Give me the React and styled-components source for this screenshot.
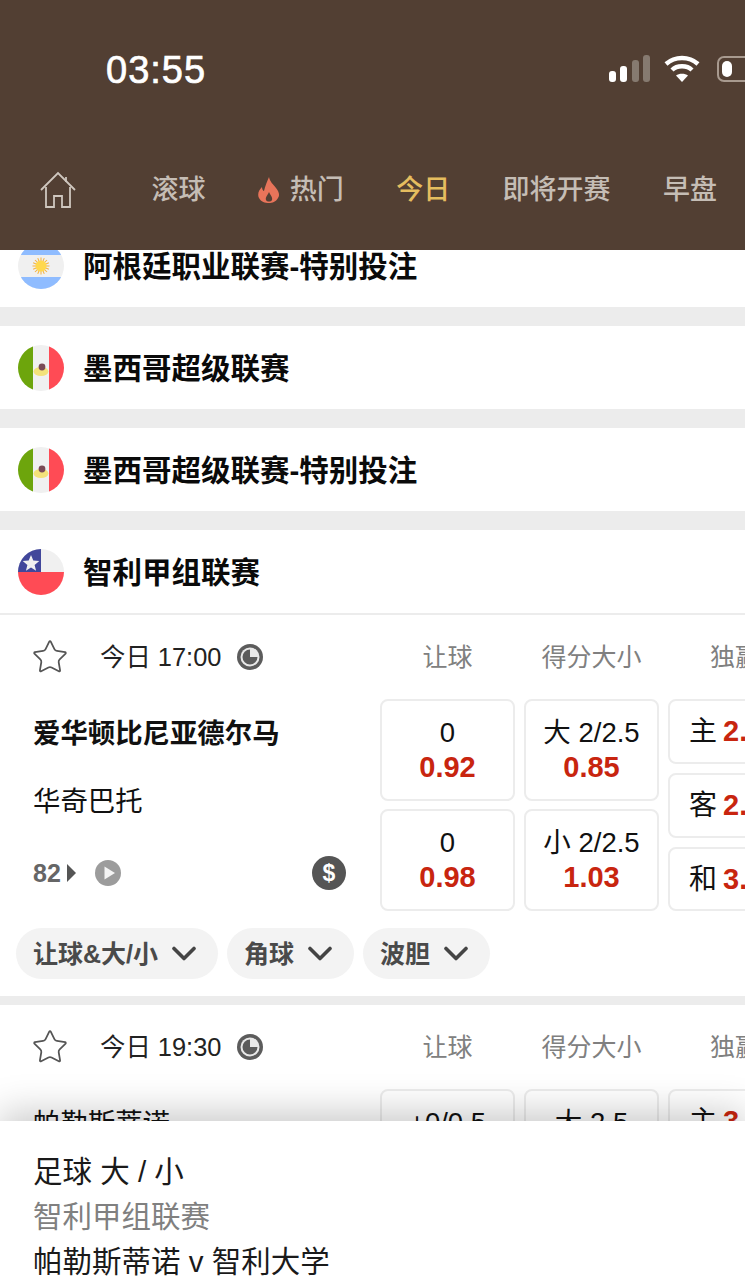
import * as React from "react"
import styled, { createGlobalStyle } from "styled-components"
import { Star } from "lucide-react"

const CJK = `"Liberation Sans", "Noto Sans CJK SC", sans-serif`

const GlobalStyle = createGlobalStyle`
  html, body {
    margin: 0;
    padding: 0;
    background: #fff;
    font-family: ${CJK};
  }
`

const Page = styled.div`
  position: relative;
  width: 745px;
  height: 1280px;
  overflow: hidden;
  background: #ececec;
`

const Header = styled.header`
  height: 250px;
  background: #523f33;
`

const StatusBar = styled.div`
  height: 138px;
  display: flex;
  align-items: center;
  padding-left: 106px;
  overflow: hidden;
`

const Clock = styled.div`
  flex: 1;
  padding-top: 2px;
  color: #fff;
  font-size: 38px;
  font-weight: 400;
  letter-spacing: 1px;
  -webkit-text-stroke: 0.7px #fff;
`

const StatusIcons = styled.div`
  display: flex;
  align-items: center;
  margin-top: -1px;
`

const WifiIcon = styled.svg`
  margin: 0 17px 0 13px;
`

const Battery = styled.div`
  width: 50px;
  height: 26px;
  margin-right: -22px;
  box-sizing: border-box;
  border: 2px solid #a89a8f;
  border-radius: 7px;
  padding: 3px;
  flex-shrink: 0;
`

const BatteryLevel = styled.div`
  width: 10px;
  height: 100%;
  background: #fff;
  border-radius: 5px;
`

const Nav = styled.nav`
  height: 104px;
  display: flex;
  align-items: center;
  gap: 52.4px;
  padding-left: 40px;
`

const HomeLink = styled.div`
  width: 36px;
  height: 38px;
  margin-right: 23px;
`

const NavItem = styled.div`
  display: flex;
  align-items: center;
  gap: 10px;
  font-size: 27px;
  font-weight: 500;
  white-space: nowrap;
  color: ${({ $active }) => ($active ? "#e5bd5f" : "#c5bdb5")};
`

const NavLabel = styled.span`
  padding-bottom: 5px;
`

const Scroller = styled.main`
  height: 1030px;
  overflow: hidden;
`

const List = styled.div`
  margin-top: -26px;
  display: flex;
  flex-direction: column;
  gap: 19px;
`

const LeagueRow = styled.div`
  height: 83px;
  display: flex;
  align-items: center;
  gap: 19px;
  padding-left: 18px;
  background: #fff;
`

const LeagueName = styled.div`
  padding-bottom: 4px;
  font-size: 29.5px;
  font-weight: 700;
  color: #0a0a0a;
`

const LeagueGroup = styled.section`
  display: flex;
  flex-direction: column;
`

const MatchCard = styled.div`
  background: #fff;
  border-top: 2px solid #ececec;
  padding-bottom: 17px;
  margin-bottom: ${({ $gap }) => $gap || 0}px;
`

const MatchHead = styled.div`
  height: 84px;
  display: flex;
  align-items: center;
  padding-left: 33px;
  white-space: nowrap;
`

const Kickoff = styled.div`
  width: 347px;
  flex-shrink: 0;
  box-sizing: border-box;
  display: flex;
  align-items: center;
  gap: 16px;
  font-size: 25.4px;
  color: #222;
`

const KickoffTime = styled.span`
  padding-bottom: 4px;
`

const StarIcon = styled(Star)`
  margin: 0 15px 0 -2px;
  flex-shrink: 0;
`

const ColTitle = styled.div`
  width: 135px;
  margin-right: 9px;
  padding-bottom: 4px;
  flex-shrink: 0;
  text-align: center;
  font-size: 25px;
  color: #808080;
`

const ColTitleClipped = styled(ColTitle)`
  text-align: left;
  padding-left: 42px;
`

const MatchBody = styled.div`
  display: flex;
  overflow: hidden;
`

const Teams = styled.div`
  width: 380px;
  flex-shrink: 0;
  box-sizing: border-box;
  padding: 0 34px 0 33px;
  display: flex;
  flex-direction: column;
`

const Team = styled.div`
  height: 68px;
  padding-top: 2px;
  box-sizing: border-box;
  line-height: 66px;
  font-size: 27.4px;
  color: #111;
  font-weight: ${({ $strong }) => ($strong ? 700 : 400)};
  white-space: nowrap;
`

const Meta = styled.div`
  height: 76px;
  display: flex;
  align-items: center;
  font-size: 25px;
  font-weight: 700;
  color: #666;
`

const MoreArrow = styled.span`
  width: 0;
  height: 0;
  margin: 0 19px 0 6px;
  border-left: 9px solid #555;
  border-top: 9px solid transparent;
  border-bottom: 9px solid transparent;
`

const MoneyBadge = styled.div`
  width: 34px;
  height: 34px;
  margin-left: auto;
  border-radius: 50%;
  background: #555;
  color: #fff;
  font-size: 23px;
  font-weight: 700;
  line-height: 34px;
  text-align: center;
`

const OddsCol = styled.div`
  width: 135px;
  margin-right: 9px;
  flex-shrink: 0;
  display: flex;
  flex-direction: column;
  gap: ${({ $gap }) => $gap}px;
`

const OddsCell = styled.div`
  height: ${({ $h }) => $h}px;
  box-sizing: border-box;
  border: 2px solid #ececec;
  border-radius: 8px;
  display: flex;
  flex-direction: column;
  align-items: center;
  justify-content: center;
  font-size: 27.5px;
  line-height: 35px;
  color: #111;
  white-space: nowrap;
`

const WinCell = styled(OddsCell)`
  flex-direction: row;
  justify-content: flex-start;
  gap: 6px;
  padding-left: 19px;
  font-size: 28px;
`

const Price = styled.div`
  color: #c8250f;
  font-size: 29px;
  font-weight: 700;
`

const Pills = styled.div`
  display: flex;
  gap: 9px;
  padding: 17px 0 0 16px;
`

const Pill = styled.div`
  height: 51px;
  display: flex;
  align-items: center;
  gap: 14px;
  padding: 0 22px 0 17px;
  border-radius: 26px;
  background: #f3f3f3;
  font-size: 25px;
  font-weight: 700;
  color: #4a4a4a;
`

const PillLabel = styled.span`
  padding-bottom: 4px;
`

const Sheet = styled.aside`
  position: absolute;
  left: 0;
  right: 0;
  bottom: 0;
  height: 159px;
  box-sizing: border-box;
  padding-top: 28px;
  padding-left: 33px;
  background: #fff;
  box-shadow: 0 -8px 36px rgba(0, 0, 0, 0.22);
  font-size: 29.5px;
  line-height: 45px;
  color: #1a1a1a;
`

const SheetLeague = styled.div`
  color: #808080;
`

const House = () => (
  <svg width="36" height="38" viewBox="0 0 36 38" fill="none" stroke="#cfc7bf" strokeWidth="1.8">
    <path d="M1 19 L18 2 L35 19" />
    <path d="M26 6 V11" />
    <path d="M6 16 V36 H14 V25 H22 V36 H30 V16" />
  </svg>
)

const Flame = () => (
  <svg width="22" height="26" viewBox="0 0 22 26">
    <path
      fill="#e8745a"
      d="M11 0 C12 5 15 7 18 11 C21 15 22 18 20 21 C18 25 14 26 11 26 C7 26 3 25 1 21 C-1 17 1 13 4 10 C4 12 5 14 6 14 C7 9 9 5 11 0 Z"
    />
    <path fill="#523f33" d="M11 15 C12 18 15 20 14 23 C13 25 9 25 8 23 C7 20 10 18 11 15 Z" />
  </svg>
)

const Signal = () => (
  <svg width="42" height="27" viewBox="0 0 42 27">
    <rect x="0" y="16" width="7" height="11" rx="3" fill="#fff" />
    <rect x="11" y="11" width="7" height="16" rx="3" fill="#fff" />
    <rect x="23" y="5" width="7" height="22" rx="3" fill="#867a70" />
    <rect x="34" y="0" width="7" height="27" rx="3" fill="#867a70" />
  </svg>
)

const Wifi = () => (
  <WifiIcon width="36" height="27" viewBox="0 0 36 27" fill="none" stroke="#fff" strokeWidth="4.4">
    <path d="M2 9 C11 1 25 1 34 9" />
    <path d="M8 15 C13 10 23 10 28 15" />
    <path d="M18 27 L12 20.5 C15 18 21 18 24 20.5 Z" fill="#fff" stroke="none" />
  </WifiIcon>
)

const sunRays = Array.from({ length: 16 }, (_, i) => (i * 360) / 16)

const Argentina = () => (
  <svg width="46" height="46" viewBox="0 0 46 46">
    <defs>
      <clipPath id="ar">
        <circle cx="23" cy="23" r="23" />
      </clipPath>
    </defs>
    <g clipPath="url(#ar)">
      <rect width="46" height="46" fill="#f0f0f0" />
      <rect width="46" height="12" fill="#8fbcff" />
      <rect y="34" width="46" height="12" fill="#8fbcff" />
      {sunRays.map(a => (
        <path key={a} d="M23 14.5 V19" stroke="#f5b13c" strokeWidth="1" transform={`rotate(${a} 23 23)`} />
      ))}
      <circle cx="23" cy="23" r="5.5" fill="#ffd84d" />
    </g>
  </svg>
)

const Mexico = () => (
  <svg width="46" height="46" viewBox="0 0 46 46">
    <defs>
      <clipPath id="mx">
        <circle cx="23" cy="23" r="23" />
      </clipPath>
    </defs>
    <g clipPath="url(#mx)">
      <rect width="15" height="46" fill="#6da50c" />
      <rect x="15" width="16" height="46" fill="#f0f0f0" />
      <rect x="31" width="15" height="46" fill="#ff4b55" />
      <ellipse cx="23" cy="26.5" rx="7.5" ry="4.5" fill="#f3e27a" />
      <circle cx="24" cy="22" r="3.4" fill="#7a4a55" />
    </g>
  </svg>
)

const Chile = () => (
  <svg width="46" height="46" viewBox="0 0 46 46">
    <defs>
      <clipPath id="cl">
        <circle cx="23" cy="23" r="23" />
      </clipPath>
    </defs>
    <g clipPath="url(#cl)">
      <rect width="46" height="23" fill="#f0f0f0" />
      <rect y="23" width="46" height="23" fill="#ff4b55" />
      <rect width="23" height="23" fill="#41479b" />
      <path
        fill="#f0f0f0"
        d="M13 6 L15.3 11.6 L21.3 12 L16.6 15.9 L18.1 21.7 L13 18.5 L7.9 21.7 L9.4 15.9 L4.7 12 L10.7 11.6 Z"
      />
    </g>
  </svg>
)

const ClockIcon = () => (
  <svg width="26" height="26" viewBox="0 0 26 26">
    <circle cx="13" cy="13" r="13" fill="#5c5c5c" />
    <circle cx="13" cy="13" r="9.5" fill="#e9e9e9" />
    <path d="M13 13 V5.5 A7.5 7.5 0 1 0 20.5 13 Z" fill="#5c5c5c" />
  </svg>
)

const PlayIcon = () => (
  <svg width="26" height="26" viewBox="0 0 26 26">
    <circle cx="13" cy="13" r="13" fill="#9c9c9c" />
    <path d="M9.5 6.5 L20 13 L9.5 19.5 Z" fill="#f4f4f4" />
  </svg>
)

const Chevron = () => (
  <svg width="24" height="15" viewBox="0 0 24 15" fill="none" stroke="#444" strokeWidth="3.6" strokeLinecap="round" strokeLinejoin="round">
    <path d="M2 2.5 L12 12.5 L22 2.5" />
  </svg>
)

const navItems = [
  { label: "滚球" },
  { label: "热门", flame: true },
  { label: "今日", active: true },
  { label: "即将开赛" },
  { label: "早盘" },
]

const leagues = [
  { name: "阿根廷职业联赛-特别投注", Flag: Argentina },
  { name: "墨西哥超级联赛", Flag: Mexico },
  { name: "墨西哥超级联赛-特别投注", Flag: Mexico },
]

const MatchTop = ({ time }) => (
  <MatchHead>
    <Kickoff>
      <StarIcon size={38} strokeWidth={1.1} color="#555" />
      <KickoffTime>今日 {time}</KickoffTime>
      <ClockIcon />
    </Kickoff>
    <ColTitle>让球</ColTitle>
    <ColTitle>得分大小</ColTitle>
    <ColTitleClipped>独赢</ColTitleClipped>
  </MatchHead>
)

const App = () => (
  <Page>
    <GlobalStyle />
    <Header>
      <StatusBar>
        <Clock>03:55</Clock>
        <StatusIcons>
          <Signal />
          <Wifi />
          <Battery>
            <BatteryLevel />
          </Battery>
        </StatusIcons>
      </StatusBar>
      <Nav>
        <HomeLink>
          <House />
        </HomeLink>
        {navItems.map(item => (
          <NavItem key={item.label} $active={item.active}>
            {item.flame && <Flame />}
            <NavLabel>{item.label}</NavLabel>
          </NavItem>
        ))}
      </Nav>
    </Header>
    <Scroller>
      <List>
        {leagues.map(({ name, Flag }) => (
          <LeagueRow key={name}>
            <Flag />
            <LeagueName>{name}</LeagueName>
          </LeagueRow>
        ))}
        <LeagueGroup>
          <LeagueRow>
            <Chile />
            <LeagueName>智利甲组联赛</LeagueName>
          </LeagueRow>
          <MatchCard $gap={7}>
            <MatchTop time="17:00" />
            <MatchBody>
              <Teams>
                <Team $strong>爱华顿比尼亚德尔马</Team>
                <Team>华奇巴托</Team>
                <Meta>
                  82
                  <MoreArrow />
                  <PlayIcon />
                  <MoneyBadge>$</MoneyBadge>
                </Meta>
              </Teams>
              <OddsCol $gap={8}>
                <OddsCell $h={102}>
                  0<Price>0.92</Price>
                </OddsCell>
                <OddsCell $h={102}>
                  0<Price>0.98</Price>
                </OddsCell>
              </OddsCol>
              <OddsCol $gap={8}>
                <OddsCell $h={102}>
                  大 2/2.5<Price>0.85</Price>
                </OddsCell>
                <OddsCell $h={102}>
                  小 2/2.5<Price>1.03</Price>
                </OddsCell>
              </OddsCol>
              <OddsCol $gap={9}>
                <WinCell $h={65}>
                  主<Price>2.10</Price>
                </WinCell>
                <WinCell $h={65}>
                  客<Price>2.90</Price>
                </WinCell>
                <WinCell $h={64}>
                  和<Price>3.20</Price>
                </WinCell>
              </OddsCol>
            </MatchBody>
            <Pills>
              <Pill>
                <PillLabel>让球&大/小</PillLabel>
                <Chevron />
              </Pill>
              <Pill>
                <PillLabel>角球</PillLabel>
                <Chevron />
              </Pill>
              <Pill>
                <PillLabel>波胆</PillLabel>
                <Chevron />
              </Pill>
            </Pills>
          </MatchCard>
          <MatchCard>
            <MatchTop time="19:30" />
            <MatchBody>
              <Teams>
                <Team>帕勒斯蒂诺</Team>
              </Teams>
              <OddsCol $gap={8}>
                <OddsCell $h={102}>
                  +0/0.5<Price>0.92</Price>
                </OddsCell>
              </OddsCol>
              <OddsCol $gap={8}>
                <OddsCell $h={102}>
                  大 2.5<Price>0.90</Price>
                </OddsCell>
              </OddsCol>
              <OddsCol $gap={9}>
                <WinCell $h={65}>
                  主<Price>3.10</Price>
                </WinCell>
              </OddsCol>
            </MatchBody>
          </MatchCard>
        </LeagueGroup>
      </List>
    </Scroller>
    <Sheet>
      <div>足球 大 / 小</div>
      <SheetLeague>智利甲组联赛</SheetLeague>
      <div>帕勒斯蒂诺 v 智利大学</div>
    </Sheet>
  </Page>
)

export default App
